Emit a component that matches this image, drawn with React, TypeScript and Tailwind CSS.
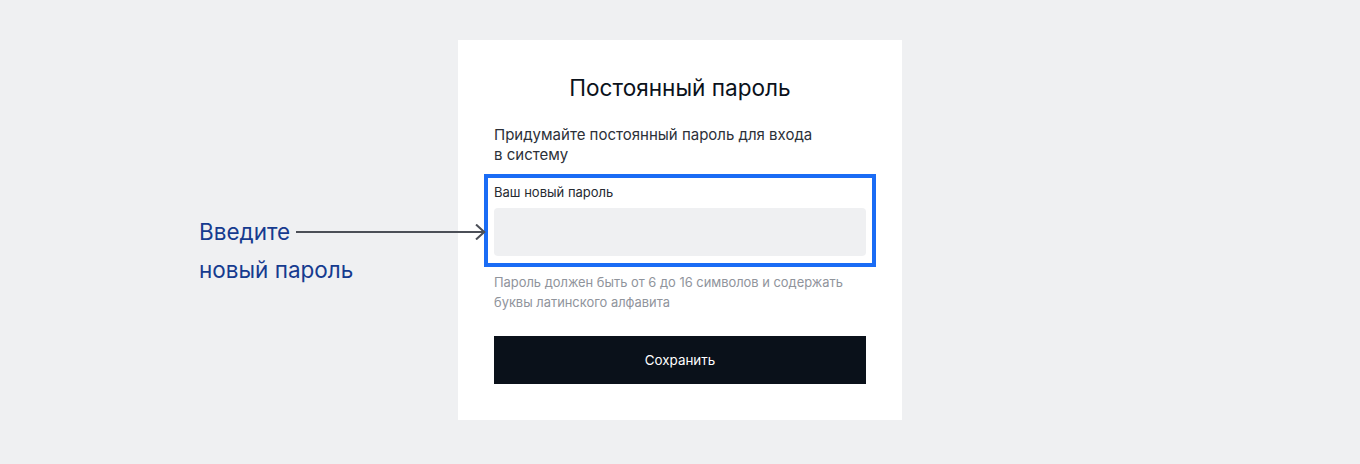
export default function App() {
  return (
    <div className="min-h-screen bg-[#eff0f2] flex justify-center pt-10 font-['Inter',sans-serif]">
      <div className="w-[444px] h-[380px] bg-white px-9 pt-8">
        <h1 className="text-center text-[22.6px] leading-8 text-[#0b121b]">Постоянный пароль</h1>
        <p className="mt-[21px] w-[330px] text-[15px] leading-5 text-[#2c3038]">
          Придумайте постоянный пароль для входа в систему
        </p>

        <div className="relative mt-[9px] -mx-[10px] border-4 border-[#1a6cf5] px-[6px] pt-[6px] pb-[7px]">
          {/* annotation on the left */}
          <div className="absolute right-full top-[35px] w-[287px] mr-[2px] text-[22.5px] leading-[38px] text-[#163b8f]">
            <div className="flex items-center">
              <span>Введите</span>
              <svg className="ml-[6px] flex-1 h-4" viewBox="0 0 185 16" preserveAspectRatio="none">
                <path d="M0 8H184" stroke="#4b4f57" strokeWidth="2" fill="none" />
                <path d="M175.5 0.5L183.5 8L175.5 15.5" stroke="#4b4f57" strokeWidth="2" fill="none" />
              </svg>
            </div>
            <div>новый пароль</div>
          </div>

          <label className="block text-[13px] leading-4 text-[#262a31]">Ваш новый пароль</label>
          <div className="mt-2 h-12 rounded-sm bg-[#eff0f2]" />
        </div>

        <p className="mt-[6px] text-[12.9px] leading-5 text-[#90949c]">
          Пароль должен быть от 6 до 16 символов и содержать буквы латинского алфавита
        </p>

        <button className="mt-[23px] w-full h-12 bg-[#0a111a] text-white text-[13.4px]">Сохранить</button>
      </div>
    </div>
  );
}
